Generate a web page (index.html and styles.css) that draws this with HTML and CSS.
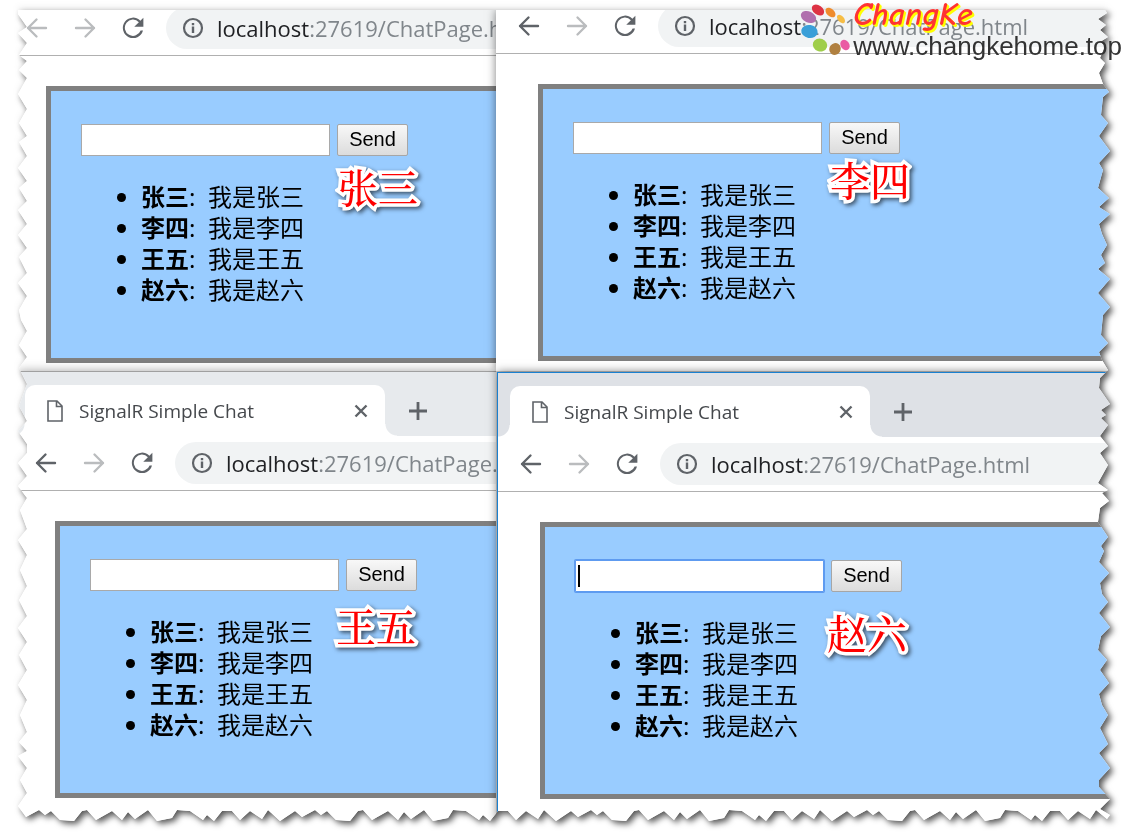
FILE: index.html
```html
<!DOCTYPE html>
<html lang="zh-CN">
<head>
<meta charset="utf-8">
<meta name="viewport" content="width=device-width, initial-scale=1">
<title>SignalR Simple Chat</title>
<link rel="stylesheet" href="styles.css">
</head>
<body>
<svg class="sprite" aria-hidden="true">
  <symbol id="back" viewBox="0 0 24 24"><path d="M4.800 12H19.200M11.600 5.200 4.800 12l6.800 6.800" fill="none" stroke="currentColor" stroke-width="1.900" stroke-linecap="round" stroke-linejoin="round"/></symbol>
  <symbol id="forward" viewBox="0 0 24 24"><path d="M19.200 12H4.800M12.400 5.200 19.200 12l-6.800 6.800" fill="none" stroke="currentColor" stroke-width="1.900" stroke-linecap="round" stroke-linejoin="round"/></symbol>
  <symbol id="reload" viewBox="0 0 24 24"><path fill="currentColor" d="M17.900 6.100A8.200 8.200 0 1 0 20 14h-1.900a6.500 6.500 0 1 1-1.400-6.700L13 11h7.300V3.700z"/></symbol>
  <symbol id="info" viewBox="0 0 24 24"><circle cx="12" cy="12" r="9" fill="none" stroke="currentColor" stroke-width="2.200"/><path fill="currentColor" d="M10.800 7h2.400v2.200h-2.400zM10.800 10.500h2.400V17h-2.400z"/></symbol>
  <symbol id="page" viewBox="0 0 16 22"><path d="M1 1h9l5 5v15H1zM9.500 1v5.500H15" fill="none" stroke="currentColor" stroke-width="1.600"/></symbol>
  <symbol id="close" viewBox="0 0 14 14"><path d="m1.500 1.500 11 11m0-11-11 11" fill="none" stroke="currentColor" stroke-width="2.400"/></symbol>
  <symbol id="plus" viewBox="0 0 18 18"><path d="M9 0v18M0 9h18" fill="none" stroke="currentColor" stroke-width="2.800"/></symbol>
</svg>

<div class="shadow">
  <main class="sheet" id="sheet">
    <section class="pane pane-zhang" aria-label="张三">
      <nav class="toolbar">
        <button class="tool off" aria-label="Back"><svg><use href="#back"/></svg></button>
        <button class="tool off" aria-label="Forward"><svg><use href="#forward"/></svg></button>
        <button class="tool" aria-label="Reload"><svg><use href="#reload"/></svg></button>
        <div class="address"><svg><use href="#info"/></svg><span><b>localhost</b>:27619/ChatPage.html</span></div>
      </nav>
      <div class="chat">
        <form class="composer"><input class="message" type="text" aria-label="Message"><button class="send" type="button">Send</button></form>
        <ul class="messages">
          <li><strong>张三</strong>: &nbsp;我是张三</li>
          <li><strong>李四</strong>: &nbsp;我是李四</li>
          <li><strong>王五</strong>: &nbsp;我是王五</li>
          <li><strong>赵六</strong>: &nbsp;我是赵六</li>
        </ul>
        <span class="tag">张三</span>
      </div>
    </section>

    <section class="pane pane-li" aria-label="李四">
      <nav class="toolbar">
        <button class="tool" aria-label="Back"><svg><use href="#back"/></svg></button>
        <button class="tool off" aria-label="Forward"><svg><use href="#forward"/></svg></button>
        <button class="tool" aria-label="Reload"><svg><use href="#reload"/></svg></button>
        <div class="address"><svg><use href="#info"/></svg><span><b>localhost</b>:27619/ChatPage.html</span></div>
      </nav>
      <div class="chat">
        <form class="composer"><input class="message" type="text" aria-label="Message"><button class="send" type="button">Send</button></form>
        <ul class="messages">
          <li><strong>张三</strong>: &nbsp;我是张三</li>
          <li><strong>李四</strong>: &nbsp;我是李四</li>
          <li><strong>王五</strong>: &nbsp;我是王五</li>
          <li><strong>赵六</strong>: &nbsp;我是赵六</li>
        </ul>
        <span class="tag">李四</span>
      </div>
    </section>

    <section class="pane pane-wang" aria-label="王五">
      <header class="tabs">
        <div class="tab"><svg class="page"><use href="#page"/></svg><span class="title">SignalR Simple Chat</span><button class="close" aria-label="Close tab"><svg><use href="#close"/></svg></button></div>
        <button class="plus" aria-label="New tab"><svg><use href="#plus"/></svg></button>
      </header>
      <nav class="toolbar">
        <button class="tool" aria-label="Back"><svg><use href="#back"/></svg></button>
        <button class="tool off" aria-label="Forward"><svg><use href="#forward"/></svg></button>
        <button class="tool" aria-label="Reload"><svg><use href="#reload"/></svg></button>
        <div class="address"><svg><use href="#info"/></svg><span><b>localhost</b>:27619/ChatPage.html</span></div>
      </nav>
      <div class="chat">
        <form class="composer"><input class="message" type="text" aria-label="Message"><button class="send" type="button">Send</button></form>
        <ul class="messages">
          <li><strong>张三</strong>: &nbsp;我是张三</li>
          <li><strong>李四</strong>: &nbsp;我是李四</li>
          <li><strong>王五</strong>: &nbsp;我是王五</li>
          <li><strong>赵六</strong>: &nbsp;我是赵六</li>
        </ul>
        <span class="tag">王五</span>
      </div>
    </section>

    <section class="pane pane-zhao" aria-label="赵六">
      <header class="tabs">
        <div class="tab"><svg class="page"><use href="#page"/></svg><span class="title">SignalR Simple Chat</span><button class="close" aria-label="Close tab"><svg><use href="#close"/></svg></button></div>
        <button class="plus" aria-label="New tab"><svg><use href="#plus"/></svg></button>
      </header>
      <nav class="toolbar">
        <button class="tool" aria-label="Back"><svg><use href="#back"/></svg></button>
        <button class="tool off" aria-label="Forward"><svg><use href="#forward"/></svg></button>
        <button class="tool" aria-label="Reload"><svg><use href="#reload"/></svg></button>
        <div class="address"><svg><use href="#info"/></svg><span><b>localhost</b>:27619/ChatPage.html</span></div>
      </nav>
      <div class="chat">
        <form class="composer active"><input class="message" type="text" aria-label="Message"><button class="send" type="button">Send</button></form>
        <ul class="messages">
          <li><strong>张三</strong>: &nbsp;我是张三</li>
          <li><strong>李四</strong>: &nbsp;我是李四</li>
          <li><strong>王五</strong>: &nbsp;我是王五</li>
          <li><strong>赵六</strong>: &nbsp;我是赵六</li>
        </ul>
        <span class="tag">赵六</span>
      </div>
    </section>
  </main>
</div>

<div class="watermark">
  <svg class="petals" viewBox="0 0 54 56" aria-hidden="true">
    <ellipse cx="8.500" cy="17" rx="8" ry="5.500" transform="rotate(25 8.500 17)" fill="#b06fae"/>
    <ellipse cx="18" cy="10" rx="6.800" ry="4.600" transform="rotate(35 18 10)" fill="#dd3344"/>
    <ellipse cx="30.500" cy="12.500" rx="5.800" ry="3.800" transform="rotate(42 30.500 12.500)" fill="#ef8b2c"/>
    <ellipse cx="41" cy="19" rx="5" ry="3" transform="rotate(48 41 19)" fill="#f6bd45"/>
    <ellipse cx="9.500" cy="31.500" rx="8.300" ry="6.500" transform="rotate(10 9.500 31.500)" fill="#3a9fd8"/>
    <ellipse cx="20" cy="45" rx="7.300" ry="6.500" transform="rotate(20 20 45)" fill="#9fce4a"/>
    <ellipse cx="35" cy="49" rx="5.600" ry="6" transform="rotate(35 35 49)" fill="#b08040"/>
    <ellipse cx="45" cy="45" rx="4.300" ry="5.500" transform="rotate(-35 45 45)" fill="#ea5ba3"/>
  </svg>
  <div class="brand">ChangKe</div>
  <div class="site">www.changkehome.top</div>
</div>
<script src="edge.js"></script>
</body>
</html>
```

FILE: styles.css
```css
* { box-sizing: border-box; }

body {
  margin: 0;
  background: #fff;
  font-family: "Noto Sans", "Noto Sans CJK SC", sans-serif;
  color: #000;
}

button { border: 0; padding: 0; background: none; color: inherit; }
svg { display: block; }
.sprite { position: absolute; width: 0; height: 0; }

.shadow {
  min-height: 100vh;
  padding: 10px 17px 17px 18px;
  display: flex;
  filter: drop-shadow(3px 3px 3px rgba(0, 0, 0, .65)) drop-shadow(0 -3px 3px rgba(0, 0, 0, .06));
}

.sheet {
  flex: 1;
  display: grid;
  grid-template-columns: minmax(0, 478fr) minmax(0, 614fr);
  grid-template-rows: 361fr 450fr;
  background: #fff;
}

/* Browser windows */
.pane {
  position: relative;
  min-width: 0;
  background: #fff;
  --strip: #dee1e6;
}
.pane-zhang { --inset: -2px; overflow: hidden; }
.pane-li { --inset: 12px; z-index: 2; box-shadow: 0 0 9px rgba(0, 0, 0, .5); }
.pane-wang { --inset: 7px; --strip: #e7eaed; z-index: 1; border-top: 1px solid #a0a0a0; box-shadow: 0 0 10px rgba(0, 0, 0, .35); }
.pane-zhao { --inset: 12px; z-index: 3; margin: 1px 0 0 1px; border: solid #1a80d0; border-width: 1px 0 0 1px; box-shadow: 0 0 9px rgba(0, 0, 0, .5); }

.tabs {
  height: 64px;
  padding: 13px 0 0 var(--inset);
  display: flex;
  background: var(--strip);
  overflow: hidden;
}
.tab {
  position: relative;
  width: 360px;
  padding: 0 17px 0 22px;
  display: flex;
  align-items: center;
  gap: 16px;
  background: #fff;
  border-radius: 10px 10px 0 0;
  color: #5f6368;
}
.tab::before,
.tab::after {
  content: "";
  position: absolute;
  bottom: 0;
  width: 12px;
  height: 12px;
}
.tab::before { right: 100%; background: radial-gradient(circle at 0 0, var(--strip) 11px, #fff 12px); }
.tab::after { left: 100%; background: radial-gradient(circle at 100% 0, var(--strip) 11px, #fff 12px); }
.page { width: 16px; height: 22px; }
.title { flex: 1; font-family: "Open Sans", "Noto Sans", sans-serif; font-size: 19px; color: #45484c; white-space: nowrap; }
.close svg { width: 14px; height: 14px; }
.plus { margin-left: 24px; color: #5f6368; }
.plus svg { width: 18px; height: 18px; }

.toolbar {
  height: 55px;
  padding: 0 0 6px calc(var(--inset) + 6px);
  display: flex;
  align-items: flex-end;
  gap: 18px;
  overflow: hidden;
  border-bottom: 1px solid #b0b0b0;
}
.pane-zhang .toolbar { height: 46px; }
.pane-li .toolbar { height: 44px; }
.tool { flex: none; height: 42px; color: #5f6368; }
.tool svg { width: 30px; height: 30px; }
.tool.off { color: #babcbe; }
.address {
  flex: 1;
  min-width: 0;
  height: 42px;
  padding-left: 15px;
  display: flex;
  align-items: center;
  gap: 12px;
  overflow: hidden;
  border-radius: 21px 0 0 21px;
  background: #f1f3f4;
  color: #80868b;
  font-family: "Open Sans", "Noto Sans", sans-serif;
  font-size: 22px;
  line-height: 30px;
  white-space: nowrap;
}
.address svg { flex: none; width: 24px; height: 24px; color: #5f6368; }
.address b { font-weight: 400; color: #202124; }

/* Chat page */
.chat {
  position: relative;
  margin: 30px 0 0 calc(var(--inset) + 30px);
  padding: 33px 0 28px 30px;
  border: 5px solid #808080;
  border-right: 0;
  background: #9cf;
}
.composer { position: relative; display: flex; gap: 7px; }
.message {
  width: 249px;
  height: 32px;
  padding: 0 4px;
  border: 1px solid #a9a9a9;
  background: #fff;
  font-size: 20px;
}
.send {
  width: 71px;
  height: 32px;
  padding-bottom: 2px;
  border: 1px solid #a6a6a6;
  border-radius: 2px;
  background: linear-gradient(#f8f8f8, #dcdcdc);
  font: 20px "Liberation Sans", Arial, sans-serif;
  color: #000;
}
.active .message { border-color: #5e9bf0; border-radius: 1px; box-shadow: 0 0 0 1px #5e9bf0; }
.active::before {
  content: "";
  position: absolute;
  left: 3px;
  top: 5px;
  width: 2px;
  height: 22px;
  background: #000;
}
.messages {
  margin: 25px 0;
  padding-left: 60px;
  font-size: 24px;
  line-height: 31px;
  white-space: nowrap;
}

/* Name captions laid over each window */
.tag {
  position: absolute;
  left: 287px;
  top: 70px;
  font: 500 40px/50px "Noto Serif CJK SC", "Noto Sans CJK SC", serif;
  color: #f00;
  -webkit-text-stroke: 7px #fff;
  paint-order: stroke fill;
  stroke-linejoin: round;
  filter: drop-shadow(2px 2px 2px rgba(0, 0, 0, .6));
}
.pane-li .tag { top: 65px; }
.pane-wang .tag { left: 276px; top: 74px; }
.pane-zhao .tag { left: 282px; top: 80px; }

.watermark {
  position: absolute;
  z-index: 5;
  top: 0;
  right: 5px;
  display: grid;
  grid-template-columns: 53px auto;
  grid-template-rows: 32px 28px;
}
.petals { grid-row: 1 / 3; width: 54px; height: 56px; }
.brand {
  font: italic 32px/30px "Comic Neue", "Lato", sans-serif;
  font-weight: 700;
  color: #f33;
  text-shadow: 1px 1px 0 #ff0, 2px 2px 0 #ff0;
}
.site { font: 26px/28px "Liberation Sans", Arial, sans-serif; color: #333; }
```

FILE: edge.js
```javascript
// Cuts the sheet along a torn outline. Points are [depth, position along the edge].
const right = [
  [5,0],[3,3],[12,9],[4,15],[10,20],[2,27],[10,32],[5,36],[10,48],[5,53],[11,63],[7,74],[1,82],[7,87],[9,105],
  [2,113],[11,126],[0,141],[11,153],[7,160],[12,178],[1,188],[11,197],[0,204],[11,214],[8,224],[3,235],[9,245],
  [5,253],[12,259],[0,269],[12,283],[0,297],[7,305],[9,325],[2,333],[11,342],[8,350],[2,360],[10,368],[11,378],
  [0,394],[9,400],[4,405],[9,408],[2,415],[10,426],[2,436],[10,443],[2,455],[12,473],[2,480],[8,483],[1,491],
  [10,498],[12,512],[2,527],[9,536],[6,541],[11,552],[1,563],[10,573],[8,584],[2,592],[11,603],[0,617],[9,626],
  [12,640],[3,650],[10,660],[1,673],[11,684],[8,695],[2,705],[10,718],[2,734],[11,743],[0,758],[11,770],[11,777],
  [0,789],[10,799],[0,805],[3,809]
];
const bottom = [
  [4,8],[11,21],[6,27],[10,33],[1,42],[0,56],[10,64],[11,69],[1,78],[10,94],[1,104],[9,110],[2,117],[11,130],
  [0,139],[3,154],[11,159],[10,172],[1,185],[6,189],[0,196],[10,204],[10,214],[1,222],[10,232],[2,244],[11,250],
  [0,262],[10,277]
];
const left = [
  [0,4],[9,17],[0,23],[9,33],[1,45],[9,51],[1,60],[9,68],[0,84],[9,99],[1,113],[9,126],[1,132],[9,146],[0,158],
  [9,171],[1,178],[9,191],[0,200],[9,214],[0,225],[9,238],[1,247],[9,263],[0,273],[9,286],[1,300],[3,310],[9,321],
  [1,335],[9,347],[1,358],[9,374],[1,396],[9,411],[0,421],[9,434],[9,443],[0,453],[9,466],[0,476],[9,488],[2,500],
  [9,519],[0,530],[9,545],[2,560],[9,576],[1,590],[9,606],[0,618],[9,632],[1,645],[9,660],[0,675],[9,690],[2,705],
  [9,722],[1,732],[9,741],[0,746],[9,758],[2,770],[9,783],[0,796]
];

const sheet = document.getElementById("sheet");

function tear() {
  const w = sheet.offsetWidth;
  const h = sheet.offsetHeight;
  const points = [[0, 0]];
  for (const [d, y] of right) if (y < h) points.push([w - d, y]);
  const run = [];
  for (let start = 0; start < w; start += 276) {
    for (const [d, x] of bottom) if (x + start < w - 8) run.push([x + start, h - d]);
  }
  points.push(...run.reverse());
  for (const [d, y] of [...left].reverse()) if (y < h) points.push([d, y]);
  sheet.style.clipPath = "polygon(" + points.map(([x, y]) => x + "px " + y + "px").join(",") + ")";
}

tear();
window.addEventListener("resize", tear);
```
